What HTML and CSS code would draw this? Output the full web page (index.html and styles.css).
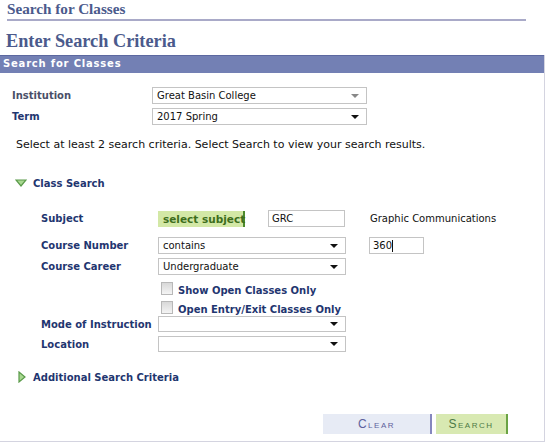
FILE: index.html
```html
<!DOCTYPE html>
<html>
<head>
<meta charset="utf-8">
<link rel="stylesheet" href="styles.css">
</head>
<body>
<div class="page">
  <h1 class="page-title">Search for Classes</h1>
  <h2 class="sub-title">Enter Search Criteria</h2>
  <div class="panel">
    <div class="panel-head">Search for Classes</div>
    <div class="top-rows">
      <div class="row r-inst">
        <span class="lbl lbl-gray">Institution</span>
        <div class="sel w-top"><span>Great Basin College</span><i class="arr arr-gray"></i></div>
      </div>
      <div class="row r-term">
        <span class="lbl">Term</span>
        <div class="sel w-top"><span>2017 Spring</span><i class="arr"></i></div>
      </div>
    </div>
    <p class="note">Select at least 2 search criteria. Select Search to view your search results.</p>
    <div class="section-head">
      <svg class="tri" width="12" height="10" viewBox="0 0 12 10"><polygon points="1,2 11,2 6,8" fill="#a8d890" stroke="#5a9a4a" stroke-width="1.2"/></svg>
      <span>Class Search</span>
    </div>
    <div class="form">
      <div class="frow f-subject">
        <span class="flbl">Subject</span>
        <div class="ctrl">
          <span class="btn-subject">select subject</span>
          <div class="inp w-grc">GRC</div>
          <span class="desc">Graphic Communications</span>
        </div>
      </div>
      <div class="frow f-num">
        <span class="flbl">Course Number</span>
        <div class="ctrl">
          <div class="sel w-wide"><span>contains</span><i class="arr"></i></div>
          <div class="inp w-num">360<span class="caret"></span></div>
        </div>
      </div>
      <div class="frow f-career">
        <span class="flbl">Course Career</span>
        <div class="ctrl">
          <div class="sel w-wide"><span>Undergraduate</span><i class="arr"></i></div>
        </div>
      </div>
      <div class="frow f-chk1">
        <span class="flbl"></span>
        <div class="ctrl"><span class="chk"></span><span class="chk-lbl">Show Open Classes Only</span></div>
      </div>
      <div class="frow f-chk2">
        <span class="flbl"></span>
        <div class="ctrl"><span class="chk"></span><span class="chk-lbl">Open Entry/Exit Classes Only</span></div>
      </div>
      <div class="frow f-mode">
        <span class="flbl">Mode of Instruction</span>
        <div class="ctrl"><div class="sel w-wide"><span></span><i class="arr"></i></div></div>
      </div>
      <div class="frow f-loc">
        <span class="flbl">Location</span>
        <div class="ctrl"><div class="sel w-wide"><span></span><i class="arr"></i></div></div>
      </div>
    </div>
    <div class="section-head add-head">
      <svg class="tri-r" width="10" height="12" viewBox="0 0 10 12"><polygon points="2,1 8,6 2,11" fill="#a8d890" stroke="#5a9a4a" stroke-width="1.2"/></svg>
      <span>Additional Search Criteria</span>
    </div>
    <div class="actions">
      <span class="btn btn-clear">Clear</span>
      <span class="btn btn-search">Search</span>
    </div>
  </div>
</div>
</body>
</html>
```
FILE: styles.css
```css
* { box-sizing: border-box; }
html, body { margin: 0; padding: 0; background: #fff; }
body { font-family: "DejaVu Sans", Verdana, sans-serif; }
.page { width: 550px; height: 446px; position: relative; }

.page-title {
  margin: 0 0 0 7px;
  width: 519px;
  height: 21px;
  font-family: "Liberation Serif", "Times New Roman", serif;
  font-weight: bold;
  font-size: 15.2px;
  line-height: 17px;
  color: #4b5a8c;
  border-bottom: 2px solid #a9aac8;
}
.sub-title {
  margin: 10px 0 0 6px;
  font-family: "Liberation Serif", "Times New Roman", serif;
  font-weight: bold;
  font-size: 18.3px;
  line-height: 20px;
  color: #4b5a8c;
  height: 24px;
}
.panel {
  width: 545px;
  height: 387px;
  border-right: 1px solid #d4d4e0;
  border-bottom: 1px solid #d4d4e0;
}
.panel-head {
  height: 18px;
  background: #7380b4;
  border-top: 1px solid #5c68a0;
  color: #fff;
  font-weight: bold;
  font-size: 10px;
  line-height: 16px;
  letter-spacing: 0.8px;
  padding-left: 3px;
}
.top-rows { padding-top: 14px; }
.row { display: flex; align-items: center; height: 17px; }
.r-term { margin-top: 4px; }
.lbl {
  width: 152px;
  padding-left: 12px;
  font-weight: bold;
  font-size: 10px;
  color: #1f3670;
}
.lbl-gray { color: #4a4f68; }

.sel {
  position: relative;
  height: 17px;
  border: 1px solid #c4c4c4;
  background: #fff;
  font-size: 10px;
  line-height: 15px;
  padding-left: 4px;
  color: #111;
}
.w-top { width: 215px; }
.w-wide { width: 188px; }
.arr {
  position: absolute;
  right: 7px;
  top: 6px;
  width: 0; height: 0;
  border-left: 4px solid transparent;
  border-right: 4px solid transparent;
  border-top: 4px solid #111;
}
.arr-gray { border-top-color: #888; }

.note {
  margin: 12px 0 0 16px;
  font-size: 11px;
  line-height: 15px;
  color: #111;
}
.section-head {
  display: flex;
  align-items: center;
  margin-top: 24px;
  padding-left: 15px;
  height: 14px;
  font-weight: bold;
  font-size: 10px;
  color: #1f3670;
}
.section-head .tri { margin-right: 6px; }
.form { padding-top: 20px; }
.frow { display: flex; align-items: center; height: 17px; }
.flbl {
  width: 158px;
  padding-left: 41px;
  font-weight: bold;
  font-size: 10px;
  color: #1f3670;
  white-space: nowrap;
}
.ctrl { display: flex; align-items: center; }
.f-num { margin-top: 10px; }
.f-career { margin-top: 4px; }
.f-chk1 { margin-top: 6px; height: 14px; }
.f-chk2 { margin-top: 5px; height: 14px; }
.f-mode { margin-top: 2px; height: 16px; }
.f-loc { margin-top: 4px; height: 16px; }
.f-mode .sel, .f-loc .sel { height: 16px; }
.f-mode .arr, .f-loc .arr { top: 5px; }

.btn-subject {
  width: 87px;
  height: 16px;
  background: #d3e8a6;
  border-right: 2px solid #4d8a2c;
  color: #3e6e1c;
  font-weight: bold;
  font-size: 10.5px;
  line-height: 16px;
  padding-left: 5px;
  white-space: nowrap;
}
.inp {
  height: 17px;
  border: 1px solid #c4c4c4;
  background: #fff;
  font-size: 10px;
  line-height: 15px;
  padding-left: 3px;
  color: #111;
  display: flex;
  align-items: center;
}
.w-grc { width: 77px; margin-left: 23px; }
.w-num { width: 55px; margin-left: 23px; }
.caret { display: inline-block; width: 1px; height: 12px; background: #111; }
.desc { margin-left: 25px; font-size: 10px; color: #111; }

.chk {
  width: 12px;
  height: 13px;
  margin-left: 3px;
  border: 1px solid #b8b8b8;
  background: linear-gradient(#d8d8d8, #f4f4f4);
}
.chk-lbl {
  margin-left: 5px;
  padding-top: 4px;
  font-weight: bold;
  font-size: 10px;
  color: #1f3670;
}

.add-head { margin-top: 18px; padding-left: 17px; }
.tri-r { margin-right: 6px; }

.actions {
  display: flex;
  margin-top: 30px;
  padding-left: 323px;
  gap: 4px;
}
.btn {
  height: 20px;
  font-variant: small-caps;
  font-family: "Liberation Sans", Arial, sans-serif;
  font-size: 12px;
  letter-spacing: 1.5px;
  line-height: 20px;
  text-align: center;
}
.btn-clear {
  width: 109px;
  background: #e7ebf5;
  border-right: 2px solid #8587be;
  color: #5d619c;
}
.btn-search {
  width: 72px;
  background: #d8e9b2;
  border-right: 2px solid #6aa344;
  color: #4c7a46;
}
```
